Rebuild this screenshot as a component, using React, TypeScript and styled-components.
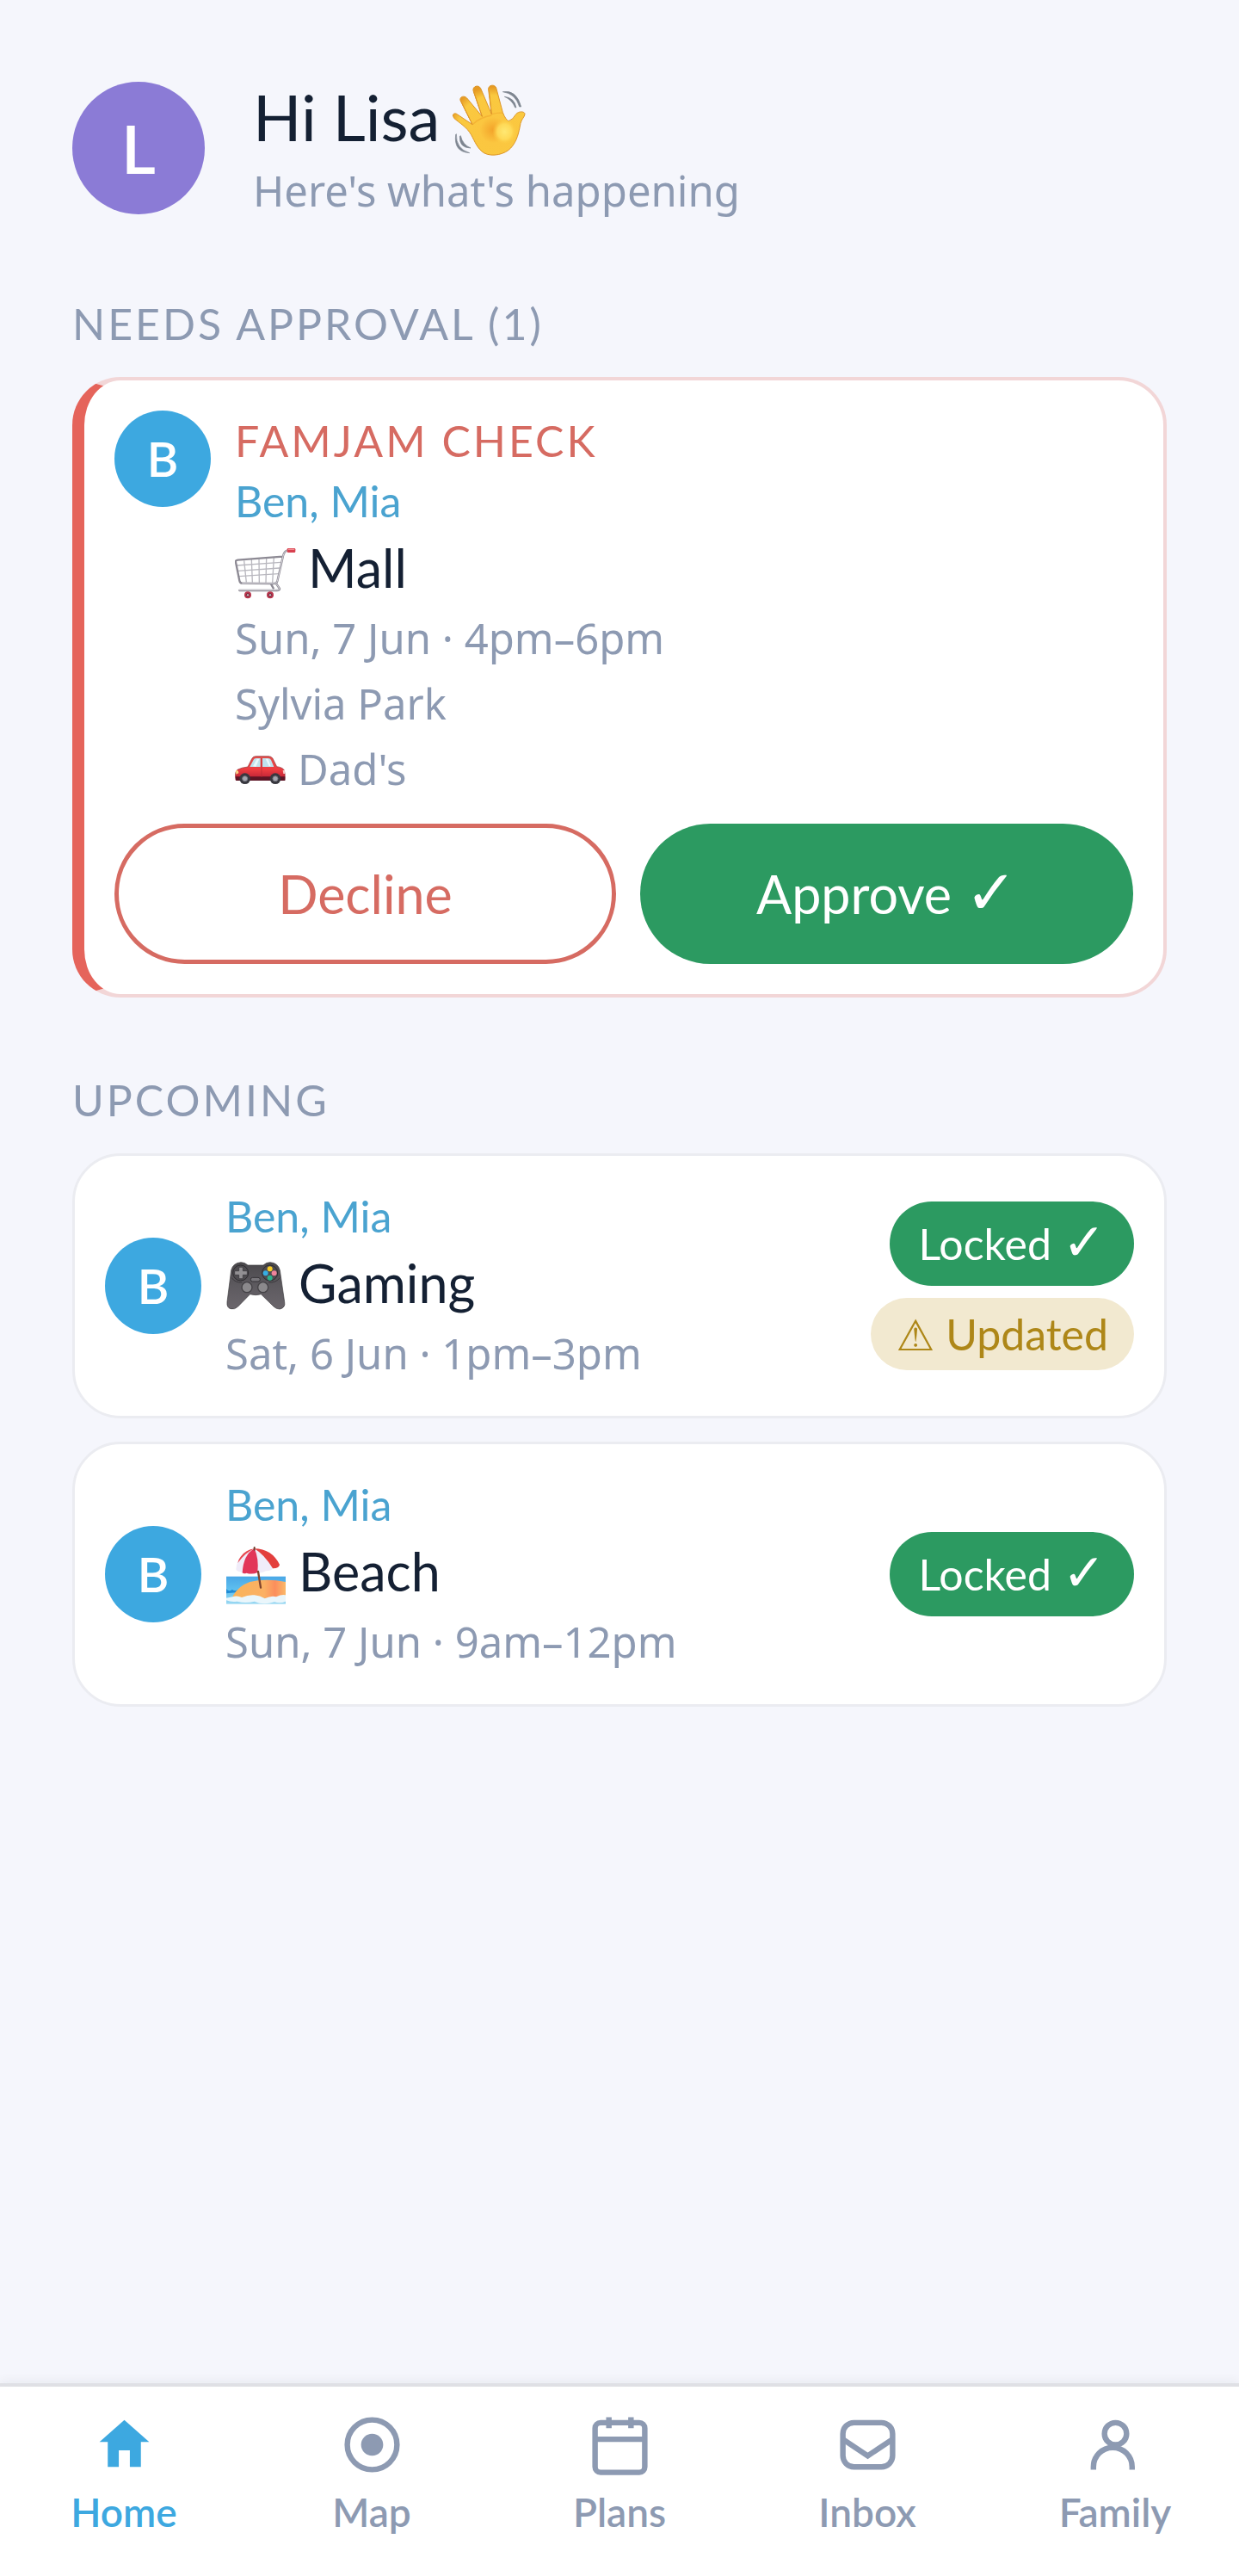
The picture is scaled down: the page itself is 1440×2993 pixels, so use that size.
import { FC, ReactNode } from "react";

import styled, { createGlobalStyle } from "styled-components";

const GlobalStyle = createGlobalStyle`
  :root {
    --color-page: #f5f6fc;
    --color-white: #ffffff;
    --color-ink: #142033;
    --color-muted: #8d9ab2;
    --color-blue: #3da8e0;
    --color-blue-text: #4aa3d0;
    --color-purple: #8b7bd6;
    --color-green: #2c9a61;
    --color-red: #e5645b;
    --color-red-text: #d66b62;
    --color-red-soft: #f2d6d7;
    --color-amber: #ae8718;
    --color-amber-soft: #f2e9d0;
    --color-line: #ebecf1;
    --font-heading: Lato, "DejaVu Sans", sans-serif;
    --font-body: "Noto Sans", "DejaVu Sans", sans-serif;
  }

  * {
    box-sizing: border-box;
  }

  body {
    margin: 0;
    background-color: var(--color-page);
    font-family: var(--font-heading);
  }
`;

const Page = styled.div`
  min-height: 100vh;
  display: flex;
  flex-direction: column;
`;

const Main = styled.main`
  flex: 1;
  padding: 87px 84px 84px;
  display: flex;
  flex-direction: column;
  gap: 84px;
`;

const Header = styled.header`
  display: flex;
  align-items: center;
  gap: 56px;
`;

const Avatar = styled.span<{ $size?: "small" | "large" }>`
  flex-shrink: 0;
  display: flex;
  align-items: center;
  justify-content: center;
  width: ${({ $size }) => ($size === "large" ? "154px" : "112px")};
  height: ${({ $size }) => ($size === "large" ? "154px" : "112px")};
  border-radius: 50%;
  background-color: ${({ $size }) =>
    $size === "large" ? "var(--color-purple)" : "var(--color-blue)"};
  color: var(--color-white);
  font-size: ${({ $size }) => ($size === "large" ? "77px" : "56px")};
  font-weight: 600;
  line-height: 1;
`;

const Greeting = styled.h1`
  margin: 0;
  display: flex;
  align-items: center;
  gap: 14px;
  color: var(--color-ink);
  font-size: 74px;
  font-weight: 400;
  line-height: 98px;
`;

const Subtitle = styled.p`
  margin: 0;
  color: var(--color-muted);
  font-family: var(--font-body);
  font-size: 49px;
  line-height: 72px;
`;

const SectionTitle = styled.h2`
  margin: 0 0 27px;
  color: var(--color-muted);
  font-size: 50px;
  font-weight: 400;
  line-height: 70px;
  letter-spacing: 3px;
  text-transform: uppercase;
`;

const ApprovalCard = styled.article`
  display: flex;
  flex-direction: column;
  gap: 26px;
  padding: 35px;
  border: 4px solid var(--color-red-soft);
  border-left: 14px solid var(--color-red);
  border-radius: 56px;
  background-color: var(--color-white);
`;

const ApprovalBody = styled.div`
  display: flex;
  align-items: flex-start;
  gap: 28px;
`;

const Info = styled.div`
  flex: 1;
  min-width: 0;
`;

const Tag = styled.p`
  margin: 0;
  color: var(--color-red-text);
  font-size: 50px;
  line-height: 70px;
  letter-spacing: 3px;
  text-transform: uppercase;
`;

const People = styled.p`
  margin: 0;
  color: var(--color-blue-text);
  font-size: 50px;
  line-height: 70px;
`;

const PlanTitle = styled.h3`
  margin: 0;
  display: flex;
  align-items: center;
  gap: 14px;
  color: var(--color-ink);
  font-size: 61px;
  font-weight: 400;
  line-height: 86px;
`;

const Detail = styled.p`
  margin: 0;
  display: flex;
  align-items: center;
  gap: 14px;
  color: var(--color-muted);
  font-family: var(--font-body);
  font-size: 49px;
  line-height: 76px;
`;

const Actions = styled.div`
  display: flex;
  gap: 28px;
`;

const Button = styled.button<{ $variation: "outline" | "solid" }>`
  flex: 1;
  min-height: 163px;
  padding: 0 28px;
  border: ${({ $variation }) =>
    $variation === "outline" ? "5px solid var(--color-red-text)" : "none"};
  border-radius: 82px;
  background-color: ${({ $variation }) =>
    $variation === "outline" ? "var(--color-white)" : "var(--color-green)"};
  color: ${({ $variation }) =>
    $variation === "outline" ? "var(--color-red-text)" : "var(--color-white)"};
  font-family: inherit;
  font-size: 61px;
  line-height: 84px;
  cursor: pointer;
`;

const Check = styled.span<{ $size?: "small" | "large" }>`
  font-family: "DejaVu Sans", sans-serif;
  font-size: ${({ $size }) => ($size === "large" ? "72px" : "60px")};
  line-height: 1;
`;

const PlanList = styled.ul`
  margin: 0;
  padding: 0;
  display: flex;
  flex-direction: column;
  gap: 27px;
  list-style: none;
`;

const PlanRow = styled.li`
  display: flex;
  align-items: center;
  gap: 28px;
  padding: 35px;
  border: 3px solid var(--color-line);
  border-radius: 56px;
  background-color: var(--color-white);
`;

const Badges = styled.div`
  display: flex;
  flex-direction: column;
  align-items: flex-end;
  gap: 14px;
`;

const Badge = styled.span<{ $status: "locked" | "updated" }>`
  padding: ${({ $status }) => ($status === "locked" ? "14px 33px" : "7px 30px")};
  border-radius: 49px;
  background-color: ${({ $status }) =>
    $status === "locked" ? "var(--color-green)" : "var(--color-amber-soft)"};
  color: ${({ $status }) =>
    $status === "locked" ? "var(--color-white)" : "var(--color-amber)"};
  font-size: 50px;
  line-height: 70px;
  white-space: nowrap;
`;

const Nav = styled.nav`
  display: grid;
  grid-template-columns: repeat(5, 1fr);
  padding: 29px 0 46px;
  border-top: 4px solid #dfe0e5;
  background-color: var(--color-white);
  box-shadow: 0 -2px 12px rgba(20, 32, 51, 0.06);
`;

const NavLink = styled.a<{ $active?: boolean }>`
  display: flex;
  flex-direction: column;
  align-items: center;
  gap: 12px;
  color: ${({ $active }) =>
    $active ? "var(--color-blue)" : "var(--color-muted)"};
  font-size: 46px;
  font-weight: 600;
  line-height: 56px;
  text-decoration: none;
`;

const NavIcon = styled.svg`
  width: 77px;
  height: 77px;
  fill: none;
  stroke: currentColor;
  stroke-width: 2;
`;

const Emoji = styled.svg`
  flex-shrink: 0;
  display: block;
`;

const WaveEmoji = () => (
  <Emoji width="86" height="89" viewBox="78 64 258 267" role="img" aria-label="Waving hand">
    <defs>
      <radialGradient id="hand" cx="0.56" cy="0.64" r="0.62">
        <stop offset="0" stopColor="#f3a32a" />
        <stop offset="0.3" stopColor="#fbc640" />
        <stop offset="0.8" stopColor="#fac93f" />
        <stop offset="1" stopColor="#e69a24" />
      </radialGradient>
      <radialGradient id="palm">
        <stop offset="0" stopColor="#ffe873" />
        <stop offset="0.6" stopColor="#ffdc5a" stopOpacity="0.9" />
        <stop offset="1" stopColor="#fccb42" stopOpacity="0" />
      </radialGradient>
    </defs>
    <path
      d="M82 190C84 182 92 182 98 187L150 222L108 138C105 124 122 120 131 130L184 194L153 104C150 88 172 82 179 96L217 186L206 100C204 84 228 80 233 94L256 180Q266 205 276 210Q292 205 302 186C312 174 334 176 333 186C332 196 322 202 318 218C312 250 306 280 284 304C264 326 220 336 192 322C168 308 158 280 146 258C130 230 104 216 86 200Z"
      fill="url(#hand)"
      stroke="#dd9628"
      strokeWidth="3"
      strokeLinejoin="round"
    />
    <ellipse cx="262" cy="247" rx="42" ry="44" fill="url(#palm)" />
    <path d="M150 222Q178 196 217 190M217 186Q240 180 256 182" fill="none" stroke="#ee9f2a" strokeWidth="4" opacity="0.5" />
    <path
      d="M184 194L154 106M217 186L208 104M150 222L110 140"
      fill="none"
      stroke="#e0962a"
      strokeWidth="3"
    />
    <path
      d="M256 108Q304 100 320 160L314 160Q300 114 256 108ZM262 125Q296 128 303 163L299 163Q288 136 262 125ZM94 255Q92 306 140 321Q84 318 92 257ZM109 261Q116 292 144 304Q104 304 106 263Z"
      fill="#7d8590"
      stroke="#7d8590"
      strokeWidth="2"
    />
  </Emoji>
);

const CartEmoji = () => (
  <Emoji width="71" height="72" viewBox="72 10 213 216" role="img" aria-label="Shopping cart">
    <g fill="none" stroke="#b9b8bf" strokeWidth="4">
      <path d="M104 92L112 168M130 88L133 168M156 86L157 169M182 83L180 170M208 80L203 170" />
      <path d="M78 109L232 98M82 128L228 118M86 147L224 138" />
    </g>
    <path
      d="M255 57Q244 59 240 76L220 164Q218 172 208 172L98 171Q90 171 88 162L75 98Q73 91 82 90L238 78M198 174L206 188M216 172L228 190Q228 196 218 196H88"
      fill="none"
      stroke="#8d8a94"
      strokeWidth="7"
      strokeLinejoin="round"
      strokeLinecap="round"
    />
    <path
      d="M255 57Q244 59 240 76L220 164Q218 171 208 171L98 170M216 172L228 190Q228 195 218 195H88"
      fill="none"
      stroke="#d6d4da"
      strokeWidth="3"
      strokeLinecap="round"
    />
    <rect x="254" y="49" width="29" height="15" rx="4" fill="#d8414f" />
    <rect x="257" y="51" width="23" height="4" rx="2" fill="#f28b8f" />
    <g fill="#b8344b">
      <circle cx="117" cy="212" r="12" />
      <circle cx="195" cy="212" r="12" />
    </g>
    <g fill="#d8c5cd" stroke="#6b2436" strokeWidth="3">
      <circle cx="117" cy="212" r="5" />
      <circle cx="195" cy="212" r="5" />
    </g>
  </Emoji>
);

const CarEmoji = () => (
  <Emoji width="59" height="36" viewBox="71 766 177 108" role="img" aria-label="Car">
    <defs>
      <linearGradient id="car" x1="0" y1="0" x2="0" y2="1">
        <stop offset="0" stopColor="#e2504c" />
        <stop offset="0.55" stopColor="#ee3d41" />
        <stop offset="1" stopColor="#b51d33" />
      </linearGradient>
    </defs>
    <path
      d="M73 850Q71 830 80 824Q94 816 116 814L130 786Q134 777 144 777H188Q199 777 203 785L217 813Q238 816 243 826Q247 836 245 860H74Z"
      fill="url(#car)"
      stroke="#8c2a30"
      strokeWidth="2"
    />
    <path d="M73 848H246V862H75Z" fill="#5c1424" />
    <path d="M123 814L136 789Q138 784 145 784H160V814ZM167 784H187Q194 784 197 790L207 814H167Z" fill="#bfe3ee" />
    <path d="M134 812L148 786H156L144 814ZM178 786H187L196 812H190Z" fill="#e9f8fb" />
    <path d="M164 784V850" stroke="#b12a33" strokeWidth="2" />
    <path d="M74 826Q84 824 84 836L75 840Z" fill="#f8d488" />
    <path d="M238 826H245V838H240Z" fill="#f6c9c4" />
    <g fill="#38383f">
      <circle cx="106" cy="855" r="19" />
      <circle cx="212" cy="855" r="19" />
    </g>
    <g fill="#a5a6ae" stroke="#777983" strokeWidth="3">
      <circle cx="106" cy="855" r="9" />
      <circle cx="212" cy="855" r="9" />
    </g>
  </Emoji>
);

const GamepadEmoji = () => (
  <Emoji width="71" height="62" viewBox="40 88 213 186" role="img" aria-label="Video game controller">
    <defs>
      <linearGradient id="pad" x1="0" y1="0" x2="0" y2="1">
        <stop offset="0" stopColor="#4a484c" />
        <stop offset="0.5" stopColor="#5d5a5f" />
        <stop offset="1" stopColor="#6b666c" />
      </linearGradient>
    </defs>
    <path
      d="M94 108Q108 108 118 118H172Q182 108 196 108Q224 110 230 136L246 246Q250 266 230 271Q218 272 208 262L164 219Q146 225 126 219L84 262Q72 274 58 270Q44 266 46 246L60 136Q66 110 94 108Z"
      fill="url(#pad)"
      stroke="#3b393d"
      strokeWidth="2"
    />
    <path d="M62 162Q74 180 98 178M230 162Q216 180 190 178" fill="none" stroke="#3b393d" strokeWidth="3" />
    <g fill="#4e4c50" stroke="#2e2c30" strokeWidth="3">
      <circle cx="93" cy="145" r="27" />
      <circle cx="195" cy="145" r="27" />
    </g>
    <path
      d="M87 125H101V138H116V152H101V165H87V152H72V138H87Z"
      fill="#929093"
      stroke="#343236"
      strokeWidth="2"
    />
    <rect x="128" y="161" width="33" height="14" rx="7" fill="#77757a" stroke="#343236" strokeWidth="3" />
    <g fill="#8b898c" stroke="#444246" strokeWidth="4">
      <circle cx="115" cy="195" r="18" />
      <circle cx="171" cy="195" r="18" />
    </g>
    <circle cx="195" cy="131" r="9" fill="#f8cc25" />
    <circle cx="180" cy="146" r="9" fill="#36aee2" />
    <circle cx="210" cy="146" r="9" fill="#f0839a" />
    <circle cx="195" cy="162" r="9" fill="#2bb18c" />
  </Emoji>
);

const BeachEmoji = () => (
  <Emoji width="71" height="76" viewBox="39 1072 213 228" role="img" aria-label="Beach with umbrella">
    <defs>
      <linearGradient id="sea" x1="0" y1="0" x2="0" y2="1">
        <stop offset="0" stopColor="#4aa7e6" />
        <stop offset="0.5" stopColor="#5fc1f0" />
        <stop offset="1" stopColor="#9bd8f2" />
      </linearGradient>
      <linearGradient id="sand" x1="0" y1="0" x2="1" y2="0">
        <stop offset="0" stopColor="#f9b45a" />
        <stop offset="0.6" stopColor="#fbb064" />
        <stop offset="0.8" stopColor="#fb8e5c" />
        <stop offset="1" stopColor="#fbb96a" />
      </linearGradient>
    </defs>
    <rect x="42" y="1203" width="207" height="96" fill="url(#sea)" />
    <path d="M42 1246Q52 1258 62 1248Q72 1256 84 1248V1258L42 1262Z" fill="#1f8bd6" />
    <path d="M64 1272Q84 1236 124 1222Q180 1208 249 1222V1276Q200 1290 150 1272Q110 1284 64 1272Z" fill="url(#sand)" />
    <path d="M64 1274Q80 1268 96 1276Q120 1266 140 1268Q160 1270 176 1280Q200 1268 216 1274Q236 1264 249 1268V1290Q230 1298 210 1292Q170 1304 140 1290Q110 1298 80 1290Q60 1294 42 1286V1278Z" fill="#eaf6fb" />
    <path d="M76 1178Q80 1122 140 1106Q200 1106 228 1162Q226 1174 206 1174Q198 1184 180 1184Q168 1192 152 1190Q132 1198 108 1191Q98 1194 92 1187Q78 1186 76 1178Z" fill="#f0ecf9" />
    <path d="M140 1106Q102 1126 98 1190Q104 1195 112 1191Q134 1197 151 1189Q156 1140 140 1106Z" fill="#e2365a" />
    <path d="M140 1106Q174 1126 204 1175Q224 1176 228 1162Q200 1106 140 1106Z" fill="#e33f3d" />
    <path d="M140 1106Q110 1110 92 1134Q84 1144 82 1156Q108 1120 140 1106Z" fill="#e8474f" />
    <path d="M153 1186L162 1242" stroke="#81452e" strokeWidth="7" strokeLinecap="round" />
    <path d="M140 1102V1110" stroke="#6f3b2b" strokeWidth="6" strokeLinecap="round" />
  </Emoji>
);

interface Plan {
  people: string;
  title: string;
  icon: ReactNode;
  when: string;
  updated?: boolean;
}

const plans: Plan[] = [
  {
    people: "Ben, Mia",
    title: "Gaming",
    icon: <GamepadEmoji />,
    when: "Sat, 6 Jun · 1pm–3pm",
    updated: true,
  },
  {
    people: "Ben, Mia",
    title: "Beach",
    icon: <BeachEmoji />,
    when: "Sun, 7 Jun · 9am–12pm",
  },
];

const tabs: { label: string; icon: ReactNode }[] = [
  {
    label: "Home",
    icon: (
      <path
        d="M12 3L3 11h3v9h4v-6h4v6h4v-9h3z"
        fill="currentColor"
        stroke="none"
      />
    ),
  },
  {
    label: "Map",
    icon: (
      <>
        <circle cx="12" cy="12" r="9" />
        <circle cx="12" cy="12" r="4" fill="currentColor" stroke="none" />
      </>
    ),
  },
  {
    label: "Plans",
    icon: (
      <>
        <rect x="3" y="4" width="18" height="18" rx="2" />
        <path d="M3 10h18M8 2v4M16 2v4" />
      </>
    ),
  },
  {
    label: "Inbox",
    icon: (
      <>
        <rect x="3" y="4" width="18" height="16" rx="4" />
        <path d="M3 10l9 6 9-6" />
      </>
    ),
  },
  {
    label: "Family",
    icon: (
      <>
        <circle cx="12" cy="8" r="4" />
        <path d="M4 21v-1a7 7 0 0 1 14 0v1" />
      </>
    ),
  },
];

const PlanItem: FC<{ plan: Plan }> = ({ plan }) => {
  return (
    <PlanRow>
      <Avatar>B</Avatar>
      <Info>
        <People>{plan.people}</People>
        <PlanTitle>
          {plan.icon}
          {plan.title}
        </PlanTitle>
        <Detail>{plan.when}</Detail>
      </Info>
      <Badges>
        <Badge $status="locked">
          Locked <Check>✓</Check>
        </Badge>
        {plan.updated && <Badge $status="updated">⚠ Updated</Badge>}
      </Badges>
    </PlanRow>
  );
};

const App = () => {
  return (
    <>
      <GlobalStyle />
      <Page>
        <Main>
          <Header>
            <Avatar $size="large">L</Avatar>
            <div>
              <Greeting>
                Hi Lisa
                <WaveEmoji />
              </Greeting>
              <Subtitle>Here's what's happening</Subtitle>
            </div>
          </Header>

          <section>
            <SectionTitle>Needs approval (1)</SectionTitle>
            <ApprovalCard>
              <ApprovalBody>
                <Avatar>B</Avatar>
                <Info>
                  <Tag>FamJam check</Tag>
                  <People>Ben, Mia</People>
                  <PlanTitle>
                    <CartEmoji />
                    Mall
                  </PlanTitle>
                  <Detail>Sun, 7 Jun · 4pm–6pm</Detail>
                  <Detail>Sylvia Park</Detail>
                  <Detail>
                    <CarEmoji />
                    Dad's
                  </Detail>
                </Info>
              </ApprovalBody>
              <Actions>
                <Button type="button" $variation="outline">
                  Decline
                </Button>
                <Button type="button" $variation="solid">
                  Approve <Check $size="large">✓</Check>
                </Button>
              </Actions>
            </ApprovalCard>
          </section>

          <section>
            <SectionTitle>Upcoming</SectionTitle>
            <PlanList>
              {plans.map((plan) => (
                <PlanItem key={plan.title} plan={plan} />
              ))}
            </PlanList>
          </section>
        </Main>

        <Nav aria-label="Main">
          {tabs.map(({ label, icon }, index) => (
            <NavLink
              key={label}
              href={`#${label.toLowerCase()}`}
              $active={index === 0}
              aria-current={index === 0 ? "page" : undefined}
            >
              <NavIcon viewBox="0 0 24 24" aria-hidden="true">
                {icon}
              </NavIcon>
              {label}
            </NavLink>
          ))}
        </Nav>
      </Page>
    </>
  );
};

export default App;
